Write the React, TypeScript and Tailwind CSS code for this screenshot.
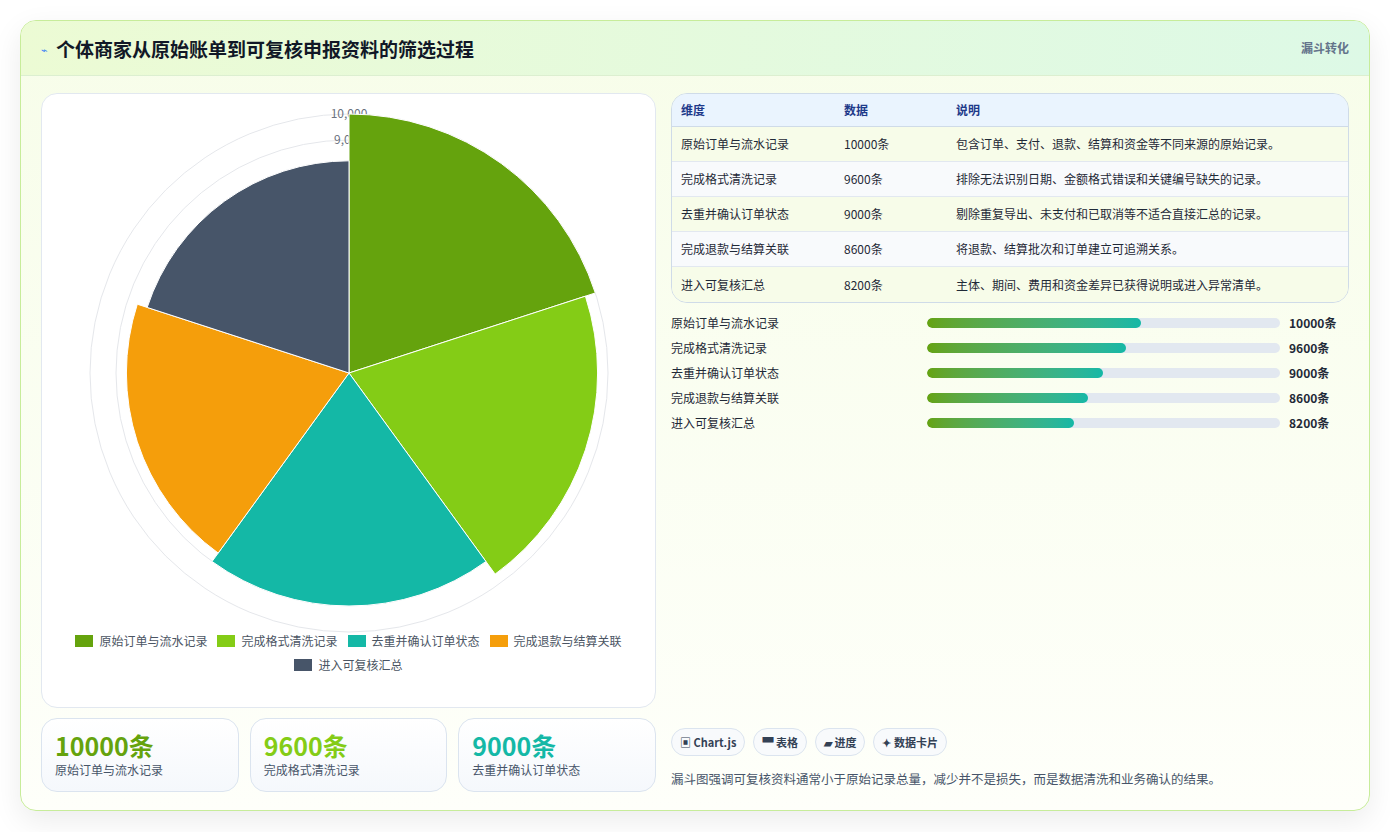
import React from "react";

const rows = [
  { name: "原始订单与流水记录", v: 10000, note: "包含订单、支付、退款、结算和资金等不同来源的原始记录。", color: "#65a30d" },
  { name: "完成格式清洗记录", v: 9600, note: "排除无法识别日期、金额格式错误和关键编号缺失的记录。", color: "#84cc16" },
  { name: "去重并确认订单状态", v: 9000, note: "剔除重复导出、未支付和已取消等不适合直接汇总的记录。", color: "#14b8a6" },
  { name: "完成退款与结算关联", v: 8600, note: "将退款、结算批次和订单建立可追溯关系。", color: "#f59e0b" },
  { name: "进入可复核汇总", v: 8200, note: "主体、期间、费用和资金差异已获得说明或进入异常清单。", color: "#475569" },
];

const font = { fontFamily: '"Noto Sans CJK SC", "Noto Sans", sans-serif' };

function PolarChart() {
  const cx = 307, cy = 279;
  const rad = (v: number) => 259 - (10000 - v) * 0.026;
  const pt = (r: number, a: number) => [cx + r * Math.cos(a), cy + r * Math.sin(a)];
  return (
    <svg width="615" height="540" className="block">
      {[10000, 9000, 8200].map((v) => (
        <circle key={v} cx={cx} cy={cy} r={rad(v)} fill="none" stroke="#e5e7eb" />
      ))}
      <text x={cx} y={cy - 259 + 4} textAnchor="middle" fontSize="12" fill="#6b7280">10,000</text>
      <text x={cx} y={cy - 233 + 4} textAnchor="middle" fontSize="12" fill="#6b7280">9,000</text>
      {rows.map((r, i) => {
        const a0 = -Math.PI / 2 + (i * 2 * Math.PI) / 5;
        const a1 = a0 + (2 * Math.PI) / 5;
        const R = rad(r.v);
        const [x0, y0] = pt(R, a0);
        const [x1, y1] = pt(R, a1);
        return (
          <path key={i} d={`M${cx} ${cy} L${x0} ${y0} A${R} ${R} 0 0 1 ${x1} ${y1} Z`} fill={r.color} stroke="#fff" strokeWidth="1" />
        );
      })}
    </svg>
  );
}

export default function App() {
  return (
    <div className="min-h-[832px] bg-white p-5" style={font}>
      <div className="overflow-hidden rounded-2xl border border-[#c7ec9a] bg-gradient-to-b from-[#f7fde9] to-[#fefffa] shadow-[0_10px_30px_rgba(0,0,0,0.08)]">
        <div className="flex h-[55px] items-start justify-between border-b border-[#dcefd0] bg-gradient-to-r from-[#ecfbd4] to-[#ddf9e6] px-5 pt-[14px]">
          <div className="flex items-center gap-2">
            <span className="text-[11px] text-[#3b82f6]">⌁</span>
            <h1 className="text-[19px] font-bold text-[#111827]">个体商家从原始账单到可复核申报资料的筛选过程</h1>
          </div>
          <span className="mt-1 text-[12px] font-semibold text-[#64748b]">漏斗转化</span>
        </div>
        <div className="flex gap-[15px] px-5 pb-[18px] pt-[17px]">
          <div className="w-[615px] shrink-0">
            <div className="h-[615px] rounded-2xl border border-[#e2e8f0] bg-white">
              <div className="pt-[1px]"><div className="-mt-[1px]"><PolarChart /></div></div>
              <div className="-mt-[2px] flex flex-wrap justify-center gap-x-[10px] gap-y-[6px] px-8 text-[12px] text-[#4b5563]">
                {rows.map((r) => (
                  <span key={r.name} className="flex items-center gap-[6px]">
                    <span className="h-[12px] w-[18px]" style={{ background: r.color }} />
                    {r.name}
                  </span>
                ))}
              </div>
            </div>
            <div className="mt-[10px] grid grid-cols-3 gap-[11px]">
              {rows.slice(0, 3).map((r) => (
                <div key={r.name} className="h-[74px] rounded-2xl border border-[#dbe4ef] bg-gradient-to-b from-white to-[#f5f8fc] px-[13px] pt-[10px]">
                  <div className="text-[25px] font-bold leading-[32px]" style={{ color: r.color }}>{r.v}条</div>
                  <div className="text-[12px] text-[#475569]">{r.name}</div>
                </div>
              ))}
            </div>
          </div>
          <div className="flex flex-1 flex-col">
            <div className="overflow-hidden rounded-2xl border border-[#cfdbe8] text-[12px]">
              <div className="grid h-[33px] grid-cols-[163px_112px_1fr] items-center border-b border-[#cfdbe8] bg-[#eaf4fe] px-[9px] font-bold text-[#1e3a8a]">
                <span>维度</span><span>数据</span><span>说明</span>
              </div>
              {rows.map((r, i) => (
                <div key={r.name} className={`grid h-[35px] grid-cols-[163px_112px_1fr] items-center px-[9px] text-[#1f2937] ${i < 4 ? "border-b border-[#e2e8f0]" : ""} ${i % 2 ? "bg-[#f8fafc]" : "bg-[#f7fce9]"}`}>
                  <span>{r.name}</span><span>{r.v}条</span><span>{r.note}</span>
                </div>
              ))}
            </div>
            <div className="mt-[11px] flex flex-col gap-[7px] text-[12px]">
              {rows.map((r) => (
                <div key={r.name} className="flex h-[18px] items-center">
                  <span className="w-[256px] text-[#1f2937]">{r.name}</span>
                  <div className="h-[10px] w-[353px] overflow-hidden rounded-full bg-[#e2e8f0]">
                    <div className="h-full rounded-full bg-gradient-to-r from-[#65a30d] to-[#14b8a6]" style={{ width: `${(r.v / 10000) * 60.5 + (r.v === 10000 ? 0 : 0) - (10000 - r.v) * 0.0045}%` }} />
                  </div>
                  <span className="ml-[9px] font-bold text-[#1f2937]">{r.v}条</span>
                </div>
              ))}
            </div>
            <div className="mt-auto flex gap-[8px] text-[11px] font-semibold text-[#334155]">
              {["▣ Chart.js", "▀ 表格", "▰ 进度", "✦ 数据卡片"].map((t) => (
                <span key={t} className="flex h-[28px] items-center rounded-full border border-[#dbe4ef] bg-[#f8fafc] px-[8px]">{t}</span>
              ))}
            </div>
            <p className="mb-[3px] mt-[14px] text-[12.5px] text-[#475569]">漏斗图强调可复核资料通常小于原始记录总量，减少并不是损失，而是数据清洗和业务确认的结果。</p>
          </div>
        </div>
      </div>
    </div>
  );
}
